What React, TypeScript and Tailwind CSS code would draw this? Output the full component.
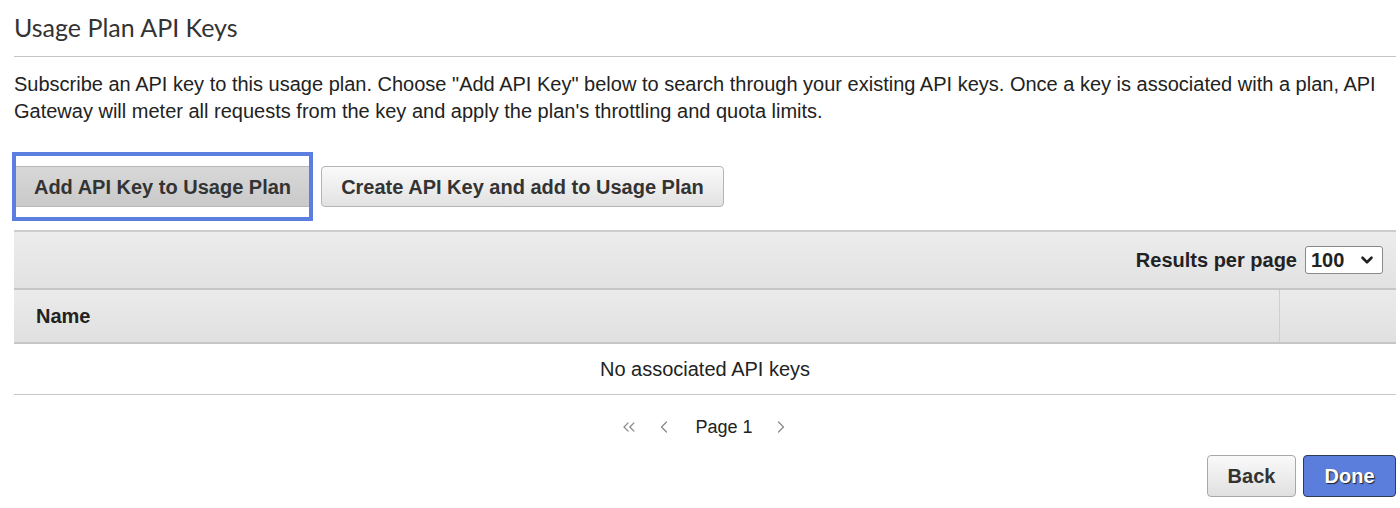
import { ChevronDown, ChevronLeft, ChevronRight, ChevronsLeft } from 'lucide-react';

const App = () => {
  return (
    <div className="w-[1400px] h-[508px] bg-white font-['Liberation_Sans',Arial,sans-serif] text-[#222]">
      <div className="ml-[14px] w-[1382px] pt-[11px]">
        {/* Title */}
        <h2 className="font-['Lato',sans-serif] text-[25px] leading-[32px] text-[#333] pb-[13px] border-b border-[#c4c4c4]">
          Usage Plan API Keys
        </h2>

        <p className="mt-[14px] text-[20px] leading-[27px] text-[#222] pr-[4px]">
          Subscribe an API key to this usage plan. Choose "Add API Key" below to search through your existing API keys. Once a key is associated with a plan, API Gateway will meter all requests from the key and apply the plan's throttling and quota limits.
        </p>

        {/* Actions */}
        <div className="mt-[27px] flex items-center">
          <div className="-ml-[2px] border-4 border-[#5b7fe0] py-[10px]">
            <button className="h-[41px] w-[293px] bg-gradient-to-b from-[#d8d8d8] to-[#c9c9c9] border-y border-[#b8b8b8] text-[20px] font-bold text-[#333]">
              Add API Key to Usage Plan
            </button>
          </div>
          <button className="ml-[8px] h-[41px] w-[403px] rounded-[4px] bg-gradient-to-b from-[#fafafa] to-[#e2e2e2] border border-[#b4b4b4] text-[20px] font-bold text-[#333]">
            Create API Key and add to Usage Plan
          </button>
        </div>

        {/* Table */}
        <div className="mt-[9px]">
          <div className="h-[58px] border-t-2 border-[#cdcdcd] bg-gradient-to-b from-[#ececec] to-[#e2e2e2] flex items-center justify-end pr-[13px]">
            <span className="text-[20px] font-bold text-[#222] mr-[8px]">Results per page</span>
            <div className="h-[28px] w-[78px] border border-[#8a8a8a] rounded-[3px] bg-white flex items-center justify-between pl-[5px] pr-[6px]">
              <span className="text-[20px] font-bold text-[#222]">100</span>
              <ChevronDown className="h-[18px] w-[18px] text-[#222]" strokeWidth={3.5} />
            </div>
          </div>
          <div className="h-[56px] flex border-y-2 border-[#c6c6c6] bg-gradient-to-b from-[#ebebeb] to-[#e0e0e0]">
            <div className="flex-1 flex items-center pl-[22px] border-r border-[#cfcfcf]">
              <span className="text-[20px] font-bold text-[#222]">Name</span>
            </div>
            <div className="w-[116px]" />
          </div>
          <div className="h-[51px] flex items-center justify-center border-b border-[#c8c8c8] text-[20px] text-[#222]">
            No associated API keys
          </div>
        </div>

        {/* Pagination */}
        <div className="h-[64px] flex items-center justify-center">
          <ChevronsLeft className="h-[20px] w-[20px] text-[#8a8a8a]" strokeWidth={1.5} />
          <ChevronLeft className="ml-[15px] h-[20px] w-[20px] text-[#8a8a8a]" strokeWidth={1.5} />
          <span className="ml-[21px] text-[18px] text-[#222]">Page 1</span>
          <ChevronRight className="ml-[18px] h-[20px] w-[20px] text-[#8a8a8a]" strokeWidth={1.5} />
        </div>

        {/* Footer */}
        <div className="flex justify-end gap-[7px] -mt-[4px]">
          <button className="h-[42px] w-[89px] rounded-[4px] bg-gradient-to-b from-[#fafafa] to-[#e0e0e0] border border-[#a8a8a8] text-[20px] font-bold text-[#333]">
            Back
          </button>
          <button className="h-[42px] w-[93px] rounded-[4px] bg-[#5b7ddc] border border-[#2f3b5e] text-[20px] font-bold text-white [text-shadow:1px_1px_1px_#222]">
            Done
          </button>
        </div>
      </div>
    </div>
  );
};

export default App;
